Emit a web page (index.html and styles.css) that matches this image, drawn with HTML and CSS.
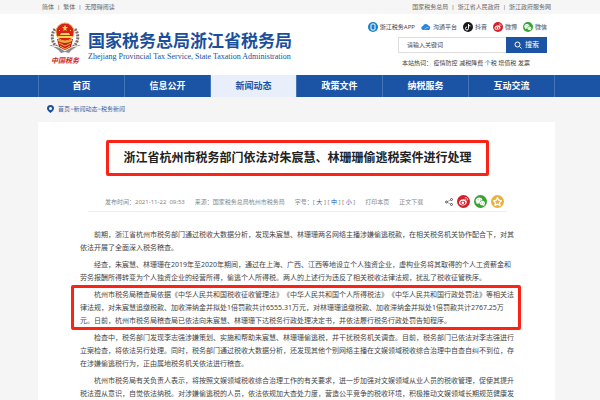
FILE: index.html
```html
<!DOCTYPE html>
<html lang="zh-CN">

<head>
    <meta charset="UTF-8">
    <meta name="viewport" content="width=device-width, initial-scale=1.0">
    <title>国家税务总局浙江省税务局</title>
    <link rel="stylesheet" href="styles.css">
</head>

<body>
    <div class="topbar">
        <div class="container topbar-inner">
            <div class="top-links">
                <a href="#">简体</a><span>|</span><a href="#">繁体</a><span>|</span><a href="#">无障碍阅读</a>
            </div>
            <div class="top-links">
                <a href="#">国家税务总局</a><span>|</span><a href="#">浙江省人民政府</a><span>|</span><a href="#">浙江政府服务网</a>
            </div>
        </div>
    </div>

    <header class="header">
        <div class="container header-inner">
            <div class="brand">
                <div class="emblem">
                    <svg width="34" height="32" viewBox="0 0 34 32">
                        <path d="M7 7C3 12 3 20 9 25M27 7c4 5 4 13-2 18" fill="none" stroke="#77706b" stroke-width="3" stroke-dasharray="2 1" />
                        <path d="M1 23c6 0 11 1 16 5 5-4 10-5 16-5-5 2-9 4-12 8l-4-1-4 1C10 27 6 25 1 23z" fill="#8d8d8d" />
                        <path d="M4 24c6 0 9 2 13 5 4-3 7-5 13-5" fill="none" stroke="#fff" stroke-width="1" />
                        <path d="M9 17h16l-2 8-6 3-6-3z" fill="#c9201c" />
                        <path d="M11 21l6 3 6-3M12 24l5 3 5-3" fill="none" stroke="#eab13c" stroke-width="1" />
                        <circle cx="17" cy="10" r="9" fill="#d9201b" stroke="#e9a83a" stroke-width="1" />
                        <path d="M17 3l1 2h2l-2 2 1 2-2-1-2 1 1-2-2-2h2z" fill="#ffd34d" />
                        <path d="M11 8h1v1h-1zM22 8h1v1h-1zM13 11h8l1 2H12zM10 14h14v2H10z" fill="#ffd34d" />
                        <path d="M10 17q7 4 14 0v2q-7 4-14 0z" fill="#eab13c" />
                    </svg>
                    <span class="emblem-text">中国税务</span>
                </div>
                <div class="brand-text">
                    <div class="brand-name">国家税务总局浙江省税务局</div>
                    <div class="brand-en">Zhejiang Provincial Tax Service, State Taxation Administration</div>
                </div>
            </div>

            <div class="tools">
                <div class="apps">
                    <a href="#">
                        <svg width="10" height="10" viewBox="0 0 20 20"><circle cx="10" cy="10" r="10" fill="#167fc9" /><rect x="6" y="4" width="8" height="12" rx="2" fill="none" stroke="#fff" stroke-width="2" /></svg>
                        浙江税务APP
                    </a>
                    <a href="#">
                        <svg width="10" height="10" viewBox="0 0 20 20"><path d="M5 16a4 4 0 0 1-1-8 6 6 0 0 1 11-1 5 5 0 0 1 1 9z" fill="#2c86de" /><path d="M7 15q3-5 8-4" fill="none" stroke="#8dc4f5" stroke-width="2" /></svg>
                        沟通平台
                    </a>
                    <a href="#">
                        <svg width="10" height="10" viewBox="0 0 20 20"><circle cx="10" cy="10" r="10" fill="#1c1a1d" /><path d="M11 4v9a3 3 0 1 1-3-3M11 5q1 3 4 3" fill="none" stroke="#fff" stroke-width="2" /></svg>
                        抖音
                    </a>
                    <a href="#">
                        <svg width="10" height="10" viewBox="0 0 20 20"><use href="#weibo" /></svg>
                        微博
                    </a>
                    <a href="#">
                        <svg width="10" height="10" viewBox="0 0 20 20"><use href="#wechat" /></svg>
                        微信
                    </a>
                </div>
                <form class="search">
                    <input type="text" placeholder="请输入关键词" aria-label="请输入关键词">
                    <button type="button">
                        <svg width="8" height="8" viewBox="0 0 16 16" fill="none" stroke="#fff" stroke-width="2"><circle cx="7" cy="7" r="5" /><path d="M11 11l4 4" /></svg>
                        搜索
                    </button>
                </form>
                <div class="hot">
                    <span>本站热词：</span>
                    <a href="#">疫情防控</a> <a href="#">减税降费</a> <a href="#">个税</a> <a href="#">增值税</a> <a href="#">发票</a>
                </div>
            </div>
        </div>
    </header>

    <nav class="nav">
        <div class="container nav-inner">
            <a href="#">首页</a>
            <a href="#">信息公开</a>
            <a href="#" class="active">新闻动态</a>
            <a href="#">政策文件</a>
            <a href="#">纳税服务</a>
            <a href="#">互动交流</a>
        </div>
    </nav>

    <main class="container">
        <div class="breadcrumb">
            <svg width="7" height="8" viewBox="0 0 14 16"><path d="M7 0a7 7 0 0 1 7 7c0 4-4 6-7 9-3-3-7-5-7-9a7 7 0 0 1 7-7z" fill="#1b4f9c" /><circle cx="7" cy="7" r="3" fill="#fff" /></svg>
            <div><a href="#">首页</a>&gt;<a href="#">新闻动态</a>&gt;<a href="#">税务新闻</a></div>
        </div>

        <article class="card">
            <h1 class="title">浙江省杭州市税务部门依法对朱宸慧、林珊珊偷逃税案件进行处理</h1>

            <div class="meta">
                <span>发布时间：2021-11-22&nbsp; 09:53</span>
                <span>来源：国家税务总局杭州市税务局</span>
                <span class="sizes">字号：[ <a href="#">大</a> ] [ <a href="#">中</a> ] [ <a href="#">小</a> ]</span>
                <a href="#">打印本页</a>
                <a href="#">正文下载</a>
                <div class="share">
                    <svg width="8" height="8" viewBox="0 0 16 16"><path d="M13 3L3 8l10 5" fill="none" stroke="#666" stroke-width="1" /><g fill="#fff" stroke="#555" stroke-width="2"><circle cx="13" cy="3" r="2" /><circle cx="3" cy="8" r="2" /><circle cx="13" cy="13" r="2" /></g></svg>
                    <a href="#" aria-label="微博">
                        <svg width="13" height="13" viewBox="0 0 20 20">
                            <g id="weibo">
                                <circle cx="10" cy="10" r="10" fill="#d3202a" />
                                <path d="M9 7c2-1 3 0 3 1 2 0 3 1 3 3 0 3-3 5-6 5s-6-1-6-4 4-6 6-5z" fill="#fff" />
                                <ellipse cx="9" cy="12" rx="4" ry="3" fill="#d3202a" />
                                <circle cx="9" cy="12" r="2" fill="#fff" />
                                <path d="M12 4c3-1 5 2 4 4M12 6q2 0 2 2" fill="none" stroke="#fff" stroke-width="1" />
                            </g>
                        </svg>
                    </a>
                    <a href="#" aria-label="微信">
                        <svg width="13" height="13" viewBox="0 0 20 20">
                            <g id="wechat">
                                <circle cx="10" cy="10" r="10" fill="#35a52f" />
                                <path d="M8 4c3 0 5 2 5 4-3 0-5 2-4 5l-3 0-2 1 0-2c-3-3-1-8 4-8z" fill="#fff" />
                                <path d="M13 9c3 0 5 3 3 6v2l-2-1c-3 0-5-1-5-3s2-4 4-4z" fill="#fff" />
                                <path d="M6 7h1v1H6zM9 7h1v1H9zM11 12h1v1h-1zM14 12h1v1h-1z" fill="#35a52f" />
                            </g>
                        </svg>
                    </a>
                    <a href="#" aria-label="收藏">
                        <svg width="13" height="13" viewBox="0 0 20 20"><circle cx="10" cy="10" r="10" fill="#e9b03c" /><path d="M10 4l2 4 4 1-3 3 1 4-4-2-4 2 1-4-3-3 4-1z" fill="none" stroke="#fff" stroke-width="2" stroke-linejoin="round" /></svg>
                    </a>
                </div>
            </div>

            <div class="content">
                <p>前期，浙江省杭州市税务部门通过税收大数据分析，发现朱宸慧、林珊珊两名网络主播涉嫌偷逃税款，在相关税务机关协作配合下，对其依法开展了全面深入税务稽查。</p>
                <p>经查，朱宸慧、林珊珊在2019年至2020年期间，通过在上海、广西、江西等地设立个人独资企业，虚构业务将其取得的个人工资薪金和劳务报酬所得转变为个人独资企业的经营所得，偷逃个人所得税。两人的上述行为违反了相关税收法律法规，扰乱了税收征管秩序。</p>
                <p class="marked">杭州市税务局稽查局依据《中华人民共和国税收征收管理法》《中华人民共和国个人所得税法》《中华人民共和国行政处罚法》等相关法律法规，对朱宸慧追缴税款、加收滞纳金并拟处1倍罚款共计6555.31万元，对林珊珊追缴税款、加收滞纳金并拟处1倍罚款共计2767.25万<br>元。日前，杭州市税务局稽查局已依法向朱宸慧、林珊珊下达税务行政处理决定书，并依法履行税务行政处罚告知程序。</p>
                <p>检查中，税务部门发现李志强涉嫌策划、实施和帮助朱宸慧、林珊珊偷逃税，并干扰税务机关调查。目前，税务部门已依法对李志强进行立案检查，将依法另行处理。同时，税务部门通过税收大数据分析，还发现其他个别网络主播在文娱领域税收综合治理中自查自纠不到位，存在涉嫌偷逃税行为，正由属地税务机关依法进行稽查。</p>
                <p>杭州市税务局有关负责人表示，将按照文娱领域税收综合治理工作的有关要求，进一步加强对文娱领域从业人员的税收管理，促使其提升税法遵从意识，自觉依法纳税。对涉嫌偷逃税的人员，依法依规加大查处力度，营造公平竞争的税收环境，积极推动文娱领域长期规范健康发</p>
            </div>
        </article>
    </main>
</body>

</html>
```

FILE: styles.css
```css
* {
    box-sizing: border-box;
}

body {
    margin: 0;
    font-family: "Noto Sans", "Noto Sans CJK SC", sans-serif;
    font-size: 6px;
    line-height: 10px;
    color: #444;
    background-color: #f6f5f6;
    text-spacing-trim: space-all;
}

a {
    color: inherit;
    text-decoration: none;
}

svg {
    display: block;
    flex-shrink: 0;
}

.container {
    margin: 0 45px 0 38px;
}

.topbar {
    background-color: #f6f6f6;
    color: #666;
}

.topbar-inner {
    display: flex;
    justify-content: space-between;
    padding: 2px 4px;
}

.top-links {
    display: flex;
    gap: 3px;
}

.header {
    background-color: #fff;
}

.header-inner {
    display: flex;
    justify-content: space-between;
    padding: 8px 8px 7px 10px;
}

.brand {
    display: flex;
    gap: 6px;
}

.emblem {
    display: flex;
    flex-direction: column;
    align-items: center;
}

.emblem-text {
    margin-top: 2px;
    font-family: "Liberation Serif", "Noto Sans CJK SC", serif;
    font-size: 7px;
    font-style: italic;
    font-weight: bold;
    color: #cf2a27;
}

.brand-text {
    padding-top: 8px;
    color: #1b4f9c;
    white-space: nowrap;
}

.brand-name {
    font-size: 17px;
    font-weight: bold;
    line-height: 22px;
}

.brand-en {
    font-family: "Liberation Serif", serif;
    font-size: 8px;
}

.tools {
    display: flex;
    flex-direction: column;
    align-items: flex-end;
}

.apps {
    display: flex;
    gap: 6px;
}

.apps a {
    display: flex;
    align-items: center;
    gap: 2px;
}

.search {
    display: flex;
    width: 149px;
    height: 16px;
    margin-top: 5px;
}

.search input {
    flex: 1;
    min-width: 0;
    padding: 0 8px;
    border: 1px solid #ddd;
    border-right: 0;
    border-radius: 0;
    font: inherit;
}

.search input::placeholder {
    color: #444;
}

.search button {
    display: flex;
    align-items: center;
    justify-content: center;
    gap: 3px;
    width: 41px;
    padding: 0;
    border: 0;
    background-color: #1b54a5;
    color: #fff;
    font: inherit;
    font-size: 7px;
}

.hot {
    width: 149px;
    margin-top: 5px;
    padding-left: 4px;
}

.nav {
    background-color: #1b54a5;
}

.nav-inner {
    display: flex;
    border-left: 1px solid #4575b8;
}

.nav a {
    flex: 1;
    border-right: 1px solid #4575b8;
    color: #fff;
    font-size: 9px;
    font-weight: bold;
    line-height: 22px;
    text-align: center;
}

.nav a.active {
    background-color: #e8eefa;
    color: #1b54a5;
}

.breadcrumb {
    display: flex;
    align-items: center;
    gap: 4px;
    padding: 7px 9px 8px;
    color: #3a65a5;
}

.card {
    padding: 18px 48px 0 50px;
    background-color: #fff;
}

.title {
    width: fit-content;
    margin: 0 auto;
    padding: 5px 14px;
    border: 3px solid #fb2316;
    border-radius: 2px;
    color: #222;
    font-size: 12px;
    font-weight: bold;
    line-height: 20px;
    white-space: nowrap;
}

.meta {
    display: flex;
    align-items: center;
    gap: 10px;
    margin-top: 19px;
    padding: 0 3px 3px 17px;
    border-bottom: 1px solid #eee;
    color: #888;
    white-space: nowrap;
}

.sizes a {
    color: #1b54a5;
}

.share {
    display: flex;
    align-items: center;
    gap: 4px;
    margin-left: auto;
}

.content {
    margin: 16px -7px 0 -8px;
    font-size: 7px;
    line-height: 13px;
}

.content p {
    margin: 0 0 4px;
    text-indent: 2em;
}

.content p:last-child {
    margin-bottom: 0;
}

.marked {
    position: relative;
}

/* red frame around the paragraph */
.marked::before {
    content: "";
    position: absolute;
    inset: -3px -7px -3px -9px;
    border: 3px solid #fb2316;
    border-radius: 2px;
}
```
